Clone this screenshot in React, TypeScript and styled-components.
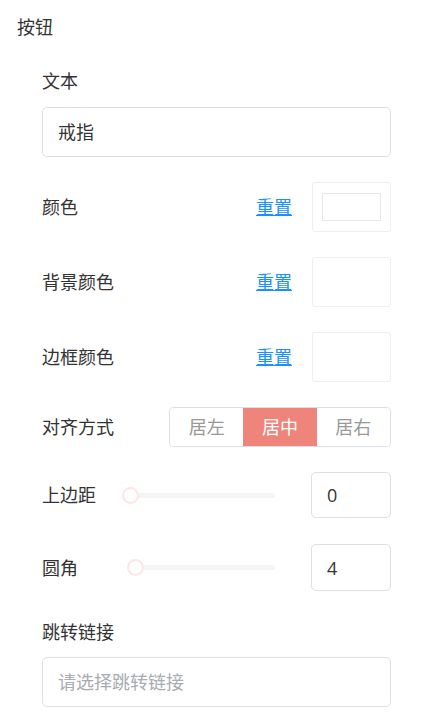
import React from "react";
import styled, { createGlobalStyle } from "styled-components";

const GlobalStyle = createGlobalStyle`
  html, body {
    margin: 0;
    padding: 0;
    background: #fff;
  }
  body {
    font-family: "Noto Sans CJK SC", "Noto Sans", sans-serif;
    color: #333;
  }
  * {
    box-sizing: border-box;
  }
`;

const Page = styled.div`
  width: 422px;
  padding: 15px 31px 0 17px;
`;

const Title = styled.div`
  font-size: 18px;
  line-height: 22px;
  height: 24px;
`;

const Form = styled.div`
  display: flex;
  flex-direction: column;
  padding-left: 25px;
`;

const Label = styled.div<{ $top?: number; $bottom?: number }>`
  font-size: 18px;
  line-height: 22px;
  height: 24px;
  margin-top: ${(p) => p.$top ?? 0}px;
  margin-bottom: ${(p) => p.$bottom ?? 0}px;
`;

const TextBox = styled.div<{ $placeholder?: boolean }>`
  height: 50px;
  border: 1px solid #dcdfe6;
  border-radius: 5px;
  padding: 0 15px 2px;
  display: flex;
  align-items: center;
  font-size: 18px;
  color: ${(p) => (p.$placeholder ? "#a8abb2" : "#333")};
`;

const Row = styled.div<{ $top: number; $height: number }>`
  display: flex;
  align-items: center;
  height: ${(p) => p.$height}px;
  margin-top: ${(p) => p.$top}px;
`;

const RowLabel = styled.div`
  font-size: 18px;
  line-height: 24px;
  padding-bottom: 2px;
  width: 80px;
  flex-shrink: 0;
  white-space: nowrap;
`;

const Spacer = styled.div`
  flex: 1;
`;

const Reset = styled.span`
  color: #1890ff;
  font-size: 18px;
  line-height: 24px;
  padding-bottom: 2px;
  text-decoration: underline;
  text-underline-offset: 1px;
  margin-right: 20px;
`;

const Swatch = styled.div`
  width: 79px;
  height: 50px;
  border: 1px solid #ebeef5;
  border-radius: 3px;
  padding: 10px 9px;
`;

const SwatchInner = styled.div`
  width: 100%;
  height: 100%;
  border: 1px solid #e4e7ed;
`;

const Segmented = styled.div`
  display: flex;
  width: 222px;
  height: 40px;
  border: 1px solid #dcdfe6;
  border-radius: 4px;
  overflow: hidden;
`;

const Segment = styled.div<{ $active?: boolean }>`
  flex: 1;
  display: flex;
  align-items: center;
  justify-content: center;
  padding-bottom: 2px;
  font-size: 18px;
  color: ${(p) => (p.$active ? "#fff" : "#999")};
  background: ${(p) => (p.$active ? "#ef857a" : "#fff")};
  margin: ${(p) => (p.$active ? "-1px 0" : "0")};
`;

const SliderWrap = styled.div`
  width: 161px;
  padding: 0 8px;
  flex-shrink: 0;
`;

const Rail = styled.div`
  position: relative;
  height: 5px;
  border-radius: 3px;
  background: #f4f4f5;
`;

const Thumb = styled.div`
  position: absolute;
  top: 50%;
  width: 17px;
  height: 17px;
  margin: -8.5px 0 0 -8.5px;
  border-radius: 50%;
  background: #fff;
  border: 2px solid #fde7e4;
`;

const NumberBox = styled.div<{ $height: number }>`
  width: 80px;
  height: ${(p) => p.$height}px;
  border: 1px solid #dcdfe6;
  border-radius: 5px;
  padding-left: 15px;
  display: flex;
  align-items: center;
  font-family: "Open Sans", "Noto Sans", sans-serif;
  font-size: 18px;
  color: #333;
`;

const colorRows = [
  { label: "颜色", filled: true },
  { label: "背景颜色", filled: false },
  { label: "边框颜色", filled: false },
];

const sliders = [
  { label: "上边距", value: 0, top: 25, height: 46 },
  { label: "圆角", value: 4, top: 26, height: 47 },
];

export default function App() {
  return (
    <Page>
      <GlobalStyle />
      <Title>按钮</Title>
      <Form>
        <Label $top={30} $bottom={14}>
          文本
        </Label>
        <TextBox>戒指</TextBox>

        {colorRows.map((r) => (
          <Row key={r.label} $top={25} $height={50}>
            <RowLabel>{r.label}</RowLabel>
            <Spacer />
            <Reset>重置</Reset>
            <Swatch>{r.filled && <SwatchInner />}</Swatch>
          </Row>
        ))}

        <Row $top={25} $height={40}>
          <RowLabel>对齐方式</RowLabel>
          <Spacer />
          <Segmented>
            <Segment>居左</Segment>
            <Segment $active>居中</Segment>
            <Segment>居右</Segment>
          </Segmented>
        </Row>

        {sliders.map((s) => (
          <Row key={s.label} $top={s.top} $height={s.height}>
            <RowLabel>{s.label}</RowLabel>
            <SliderWrap>
              <Rail>
                <Thumb style={{ left: `${s.value}%` }} />
              </Rail>
            </SliderWrap>
            <Spacer />
            <NumberBox $height={s.height}>{s.value}</NumberBox>
          </Row>
        ))}

        <Label $top={29} $bottom={13}>
          跳转链接
        </Label>
        <TextBox $placeholder>请选择跳转链接</TextBox>
      </Form>
    </Page>
  );
}
